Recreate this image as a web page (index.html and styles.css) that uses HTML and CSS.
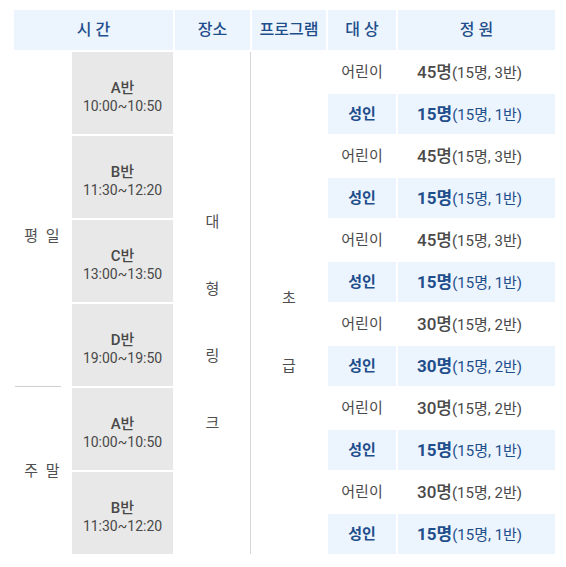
FILE: index.html
```html
<!DOCTYPE html>
<html lang="ko">
<head>
<meta charset="utf-8">
<link rel="stylesheet" href="styles.css">
</head>
<body>
<table class="schedule">
  <colgroup>
    <col class="c-day"><col class="c-class"><col class="c-place"><col class="c-prog"><col class="c-target"><col class="c-cap">
  </colgroup>
  <thead>
    <tr>
      <th colspan="2">시 간</th>
      <th>장소</th>
      <th>프로그램</th>
      <th>대 상</th>
      <th>정 원</th>
    </tr>
  </thead>
  <tbody>
    <tr>
      <td rowspan="8" class="day day-weekday">평 일</td>
      <td rowspan="2" class="cls"><div class="cls-name">A반</div><div class="cls-time">10:00~10:50</div></td>
      <td rowspan="12" class="place"><div class="vtext vtext-place"><span>대</span><span>형</span><span>링</span><span>크</span></div></td>
      <td rowspan="12" class="prog"><div class="vtext vtext-prog"><span>초</span><span>급</span></div></td>
      <td class="target">어린이</td>
      <td class="cap"><span class="cap-main">45명</span><span class="cap-sub">(15명, 3반)</span></td>
    </tr>
    <tr class="adult">
      <td class="target">성인</td>
      <td class="cap"><span class="cap-main">15명</span><span class="cap-sub">(15명, 1반)</span></td>
    </tr>
    <tr>
      <td rowspan="2" class="cls"><div class="cls-name">B반</div><div class="cls-time">11:30~12:20</div></td>
      <td class="target">어린이</td>
      <td class="cap"><span class="cap-main">45명</span><span class="cap-sub">(15명, 3반)</span></td>
    </tr>
    <tr class="adult">
      <td class="target">성인</td>
      <td class="cap"><span class="cap-main">15명</span><span class="cap-sub">(15명, 1반)</span></td>
    </tr>
    <tr>
      <td rowspan="2" class="cls"><div class="cls-name">C반</div><div class="cls-time">13:00~13:50</div></td>
      <td class="target">어린이</td>
      <td class="cap"><span class="cap-main">45명</span><span class="cap-sub">(15명, 3반)</span></td>
    </tr>
    <tr class="adult">
      <td class="target">성인</td>
      <td class="cap"><span class="cap-main">15명</span><span class="cap-sub">(15명, 1반)</span></td>
    </tr>
    <tr>
      <td rowspan="2" class="cls"><div class="cls-name">D반</div><div class="cls-time">19:00~19:50</div></td>
      <td class="target">어린이</td>
      <td class="cap"><span class="cap-main">30명</span><span class="cap-sub">(15명, 2반)</span></td>
    </tr>
    <tr class="adult">
      <td class="target">성인</td>
      <td class="cap"><span class="cap-main">30명</span><span class="cap-sub">(15명, 2반)</span></td>
    </tr>
    <tr>
      <td rowspan="4" class="day">주 말</td>
      <td rowspan="2" class="cls"><div class="cls-name">A반</div><div class="cls-time">10:00~10:50</div></td>
      <td class="target">어린이</td>
      <td class="cap"><span class="cap-main">30명</span><span class="cap-sub">(15명, 2반)</span></td>
    </tr>
    <tr class="adult">
      <td class="target">성인</td>
      <td class="cap"><span class="cap-main">15명</span><span class="cap-sub">(15명, 1반)</span></td>
    </tr>
    <tr>
      <td rowspan="2" class="cls"><div class="cls-name">B반</div><div class="cls-time">11:30~12:20</div></td>
      <td class="target">어린이</td>
      <td class="cap"><span class="cap-main">30명</span><span class="cap-sub">(15명, 2반)</span></td>
    </tr>
    <tr class="adult">
      <td class="target">성인</td>
      <td class="cap"><span class="cap-main">15명</span><span class="cap-sub">(15명, 1반)</span></td>
    </tr>
  </tbody>
</table>
</body>
</html>
```

FILE: styles.css
```css
html, body {
  background: #ffffff;
}
body {
  margin: 8px 0 0 12px;
  font-family: Roboto, "Noto Sans CJK KR", sans-serif;
  color: #4a4a4a;
}
.schedule {
  border-collapse: separate;
  border-spacing: 2px;
  table-layout: fixed;
  width: 545px;
}
.c-day { width: 56px; }
.c-class { width: 101px; }
.c-place { width: 75px; }
.c-prog { width: 74px; }
.c-target { width: 68px; }
.c-cap { width: 157px; }

th, td {
  padding: 0;
  text-align: center;
  vertical-align: middle;
}
tr {
  height: 40px;
}
th {
  background: #ecf4fd;
  color: #1f4e8c;
  font-size: 16px;
  font-weight: 500;
  line-height: 20px;
  height: 40px;
}
.day {
  font-size: 15px;
  line-height: 20px;
  word-spacing: 4px;
  color: #4f4f4f;
}
.day-weekday {
  padding-top: 34px;
  box-shadow: -4px 6px 0 -5px #cfcfcf;
}
.cls {
  background: #e8e8e8;
  padding-top: 8px;
  color: #484848;
}
.cls-name {
  font-size: 15px;
  font-weight: 500;
  line-height: 18px;
}
.cls-time {
  font-size: 14px;
  line-height: 18px;
}
.place {
  box-shadow: 1px 0 0 #d6d6d6;
}
.vtext {
  display: flex;
  flex-direction: column;
  align-items: center;
  font-size: 15px;
  color: #4f4f4f;
}
.vtext-place {
  padding-top: 40px;
  line-height: 67px;
}
.vtext-prog {
  padding-top: 58px;
  line-height: 68px;
}
.target {
  font-size: 15px;
  line-height: 20px;
  color: #4a4a4a;
}
.cap {
  text-align: left;
  padding-left: 19px;
  color: #4a4a4a;
  white-space: nowrap;
}
.cap-main {
  font-size: 17px;
  font-weight: 500;
  line-height: 20px;
}
.cap-sub {
  font-size: 15px;
  line-height: 20px;
}
.adult .target,
.adult .cap {
  background: #ecf4fd;
  color: #1f4e8c;
}
.adult .target {
  font-weight: 700;
}
.adult .cap-main {
  font-weight: 700;
}
```
